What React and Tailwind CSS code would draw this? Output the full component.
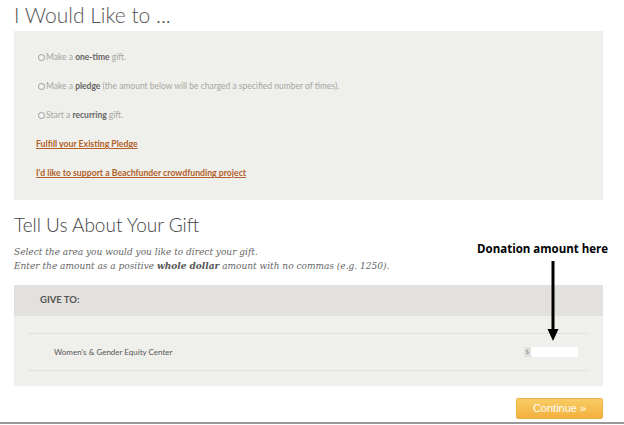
export default function App() {
  const options = [
    { pre: 'Make a ', bold: 'one-time', post: ' gift.' },
    { pre: 'Make a ', bold: 'pledge', post: ' (the amount below will be charged a specified number of times).' },
    { pre: 'Start a ', bold: 'recurring', post: ' gift.' },
  ];

  return (
    <div className="relative w-[624px] h-[425px] bg-white overflow-hidden" style={{ fontFamily: 'Lato, "Open Sans", sans-serif' }}>
      <div className="ml-[14px] w-[589px]">
        <h1 className="pt-[2px] h-[31px] text-[21px] leading-[26px] font-light text-[#555]">I Would Like to ...</h1>

        <div className="bg-[#efefeb] h-[169px] pl-[22px] pt-[20px] flex flex-col gap-[17px]">
          {options.map((o, i) => (
            <div key={i} className="h-[12px] pl-[2px] flex items-center text-[8.5px] text-[#a6a6a2]">
              <span className="w-[7px] h-[7px] rounded-full border border-[#999] mr-[1px] bg-white/40" />
              <span>
                {o.pre}
                <b className="text-[#666] font-bold">{o.bold}</b>
                {o.post}
              </span>
            </div>
          ))}
          <a className="h-[12px] leading-[12px] text-[8.7px] font-bold text-[#b25f29] underline">Fulfill your Existing Pledge</a>
          <a className="h-[12px] leading-[12px] text-[8.7px] font-bold text-[#b25f29] underline">I'd like to support a Beachfunder crowdfunding project</a>
        </div>

        <h2 className="mt-[14px] h-[22px] text-[19px] leading-[22px] font-light text-[#444]">Tell Us About Your Gift</h2>

        <div className="mt-[9px] text-[9px] leading-[14px] italic text-[#666]" style={{ fontFamily: '"DejaVu Serif", serif' }}>
          <p>Select the area you would you like to direct your gift.</p>
          <p>
            Enter the amount as a positive <b className="font-bold text-[#555]">whole dollar</b> amount with no commas (e.g. 1250).
          </p>
        </div>

        <div className="mt-[12px]">
          <div className="h-[31px] bg-[#e2e1dd] flex items-center pl-[26px] text-[9.5px] font-bold text-[#555]">GIVE TO:</div>
          <div className="h-[70px] bg-[#efefeb] px-[15px] pt-[17px]">
            <div className="border-t border-dotted border-[#d4d4d0] h-[37px] flex items-center justify-between pl-[25px] pr-[10px]">
              <span className="text-[8px] text-[#555]">Women's &amp; Gender Equity Center</span>
              <div className="flex items-center">
                <span className="h-[10px] px-[2px] bg-[#e0e0dc] text-[6px] leading-[10px] text-[#888]">$</span>
                <div className="w-[47px] h-[10px] bg-white" />
              </div>
            </div>
            <div className="border-t border-dotted border-[#d4d4d0]" />
          </div>
        </div>

        <div className="flex justify-end mt-[12px]">
          <button className="w-[87px] h-[21px] rounded-[2px] bg-gradient-to-b from-[#f8cd64] to-[#f2b03c] border border-[#eeb148] text-white text-[11px] leading-[19px]" style={{ fontFamily: '"Liberation Sans", Arial, sans-serif' }}>
            Continue »
          </button>
        </div>
      </div>

      <div className="absolute left-0 right-0 bottom-[1px] h-[2px] bg-[#9a9a9a]" />

      {/* annotation overlay */}
      <div className="absolute left-[477px] top-[241px] text-[11.5px] font-bold text-black leading-[16px]" style={{ fontFamily: '"Open Sans", sans-serif' }}>
        Donation amount here
      </div>
      <svg className="absolute left-[546px] top-[261px]" width="14" height="80" viewBox="0 0 14 80">
        <rect x="5.5" y="0" width="3" height="70" fill="#000" />
        <polygon points="1.5,68 12.5,68 7,80" fill="#000" />
      </svg>
    </div>
  );
}
